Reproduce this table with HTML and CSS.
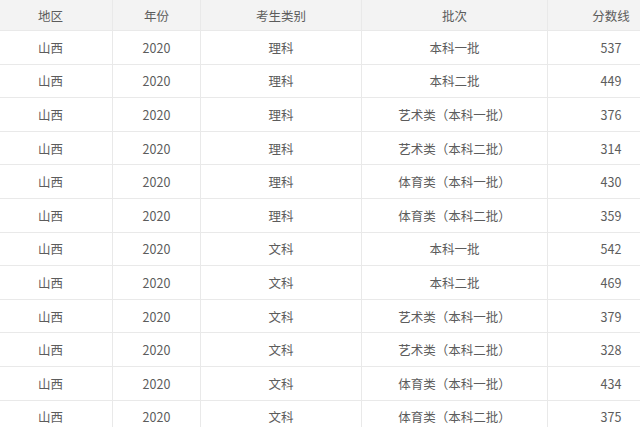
FILE: index.html
```html
<!DOCTYPE html>
<html lang="zh-CN">
<head>
<meta charset="utf-8">
<title>分数线</title>
<link rel="stylesheet" href="styles.css">
</head>
<body>
<div class="wrap">
<table class="scores">
<colgroup>
<col class="c-area"><col class="c-year"><col class="c-type"><col class="c-batch"><col class="c-score">
</colgroup>
<thead>
<tr><th>地区</th><th>年份</th><th>考生类别</th><th>批次</th><th>分数线</th></tr>
</thead>
<tbody>
<tr><td>山西</td><td>2020</td><td>理科</td><td>本科一批</td><td>537</td></tr>
<tr><td>山西</td><td>2020</td><td>理科</td><td>本科二批</td><td>449</td></tr>
<tr><td>山西</td><td>2020</td><td>理科</td><td>艺术类（本科一批）</td><td>376</td></tr>
<tr><td>山西</td><td>2020</td><td>理科</td><td>艺术类（本科二批）</td><td>314</td></tr>
<tr><td>山西</td><td>2020</td><td>理科</td><td>体育类（本科一批）</td><td>430</td></tr>
<tr><td>山西</td><td>2020</td><td>理科</td><td>体育类（本科二批）</td><td>359</td></tr>
<tr><td>山西</td><td>2020</td><td>文科</td><td>本科一批</td><td>542</td></tr>
<tr><td>山西</td><td>2020</td><td>文科</td><td>本科二批</td><td>469</td></tr>
<tr><td>山西</td><td>2020</td><td>文科</td><td>艺术类（本科一批）</td><td>379</td></tr>
<tr><td>山西</td><td>2020</td><td>文科</td><td>艺术类（本科二批）</td><td>328</td></tr>
<tr><td>山西</td><td>2020</td><td>文科</td><td>体育类（本科一批）</td><td>434</td></tr>
<tr><td>山西</td><td>2020</td><td>文科</td><td>体育类（本科二批）</td><td>375</td></tr>
</tbody>
</table>
</div>
</body>
</html>
```
FILE: styles.css
```css
html, body {
  margin: 0;
  padding: 0;
  background: #fff;
}
body {
  font-family: "Noto Sans CJK SC", "Noto Sans", sans-serif;
  color: #5c5c5c;
}
.wrap {
  width: 640px;
  height: 427px;
  overflow: hidden;
}
.scores {
  margin-left: -12px;
  border-collapse: collapse;
  table-layout: fixed;
  width: 686px;
  font-size: 12.5px;
}
.c-area { width: 124px; }
.c-year { width: 88px; }
.c-type { width: 161px; }
.c-batch { width: 186px; }
.c-score { width: 127px; }
.scores th,
.scores td {
  border: 1px solid #e9e9e9;
  text-align: center;
  padding: 0;
  font-weight: normal;
  white-space: nowrap;
}
.scores thead tr {
  background: #f3f3f3;
}
.scores th {
  height: 30px;
  border-top: none;
}
.scores td {
  height: 32.6px;
}
```
